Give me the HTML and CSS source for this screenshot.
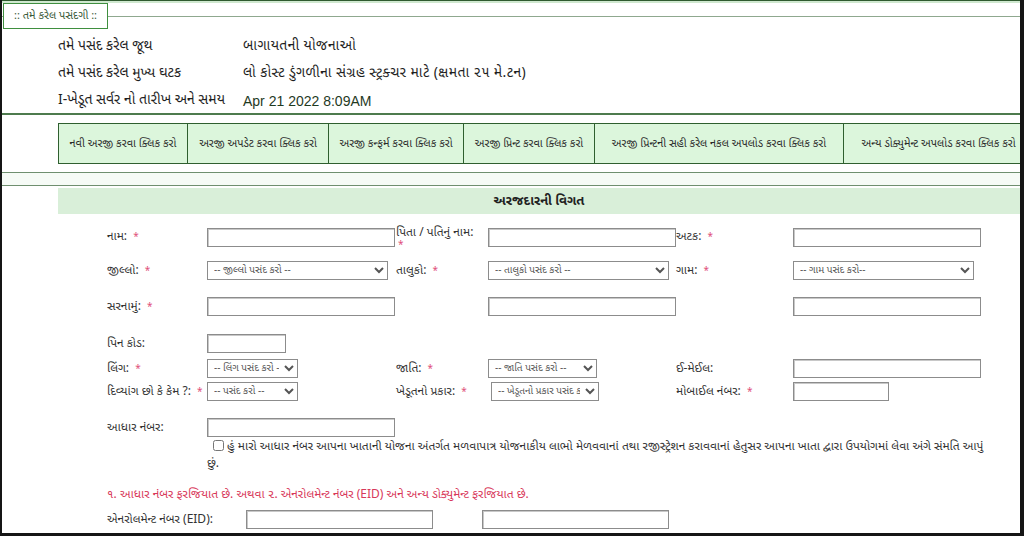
FILE: index.html
```html
<!DOCTYPE html>
<html lang="gu">
<head>
<meta charset="utf-8">
<title>અરજદારની વિગત</title>
<link rel="stylesheet" href="styles.css">
</head>
<body>
<div class="frame">
  <div class="topline"></div>
  <fieldset class="choice">
    <legend class="choice-legend">:: તમે કરેલ પસંદગી ::</legend>
    <div class="info">
      <div class="info-row"><span class="info-key">તમે પસંદ કરેલ જૂથ</span><span class="info-val">બાગાયતની યોજનાઓ</span></div>
      <div class="info-row"><span class="info-key">તમે પસંદ કરેલ મુખ્ય ઘટક</span><span class="info-val">લો કોસ્ટ ડુંગળીના સંગ્રહ સ્ટ્રક્ચર માટે (ક્ષમતા ૨૫ મે.ટન)</span></div>
      <div class="info-row"><span class="info-key">I-ખેડૂત સર્વર નો તારીખ અને સમય</span><span class="info-val info-date">Apr 21 2022 8:09AM</span></div>
    </div>
  </fieldset>

  <nav class="menu">
    <a class="menu-cell" href="#">નવી અરજી કરવા ક્લિક કરો</a>
    <a class="menu-cell" href="#">અરજી અપડેટ કરવા ક્લિક કરો</a>
    <a class="menu-cell" href="#">અરજી કન્ફર્મ કરવા ક્લિક કરો</a>
    <a class="menu-cell" href="#">અરજી પ્રિન્ટ કરવા ક્લિક કરો</a>
    <a class="menu-cell" href="#">અરજી પ્રિન્ટની સહી કરેલ નકલ અપલોડ કરવા ક્લિક કરો</a>
    <a class="menu-cell" href="#">અન્ય ડોક્યુમેન્ટ અપલોડ કરવા ક્લિક કરો</a>
  </nav>

  <div class="band"></div>

  <div class="section-head">અરજદારની વિગત</div>

  <form class="form">
    <div class="row row-first">
      <label class="lbl">નામ: <span class="req">*</span></label>
      <input class="inp w188" type="text">
      <label class="lbl lbl-wrap">પિતા / પતિનું નામ:<span class="req req-below">*</span></label>
      <input class="inp w188" type="text">
      <label class="lbl">અટક: <span class="req">*</span></label>
      <input class="inp w188" type="text">
    </div>

    <div class="row">
      <label class="lbl">જીલ્લો: <span class="req">*</span></label>
      <select class="sel w181"><option>-- જીલ્લો પસંદ કરો --</option></select>
      <label class="lbl">તાલુકો: <span class="req">*</span></label>
      <select class="sel w181"><option>-- તાલુકો પસંદ કરો --</option></select>
      <label class="lbl">ગામ: <span class="req">*</span></label>
      <select class="sel w181"><option>-- ગામ પસંદ કરો--</option></select>
    </div>

    <div class="row row-17">
      <label class="lbl">સરનામું: <span class="req">*</span></label>
      <input class="inp w188" type="text">
      <span class="lbl"></span>
      <input class="inp w188" type="text">
      <span class="lbl"></span>
      <input class="inp w188" type="text">
    </div>

    <div class="row">
      <label class="lbl">પિન કોડ:</label>
      <input class="inp w79" type="text">
    </div>

    <div class="row row-tight">
      <label class="lbl">લિંગ: <span class="req">*</span></label>
      <select class="sel w91"><option>-- લિંગ પસંદ કરો -</option></select>
      <label class="lbl">જાતિ: <span class="req">*</span></label>
      <select class="sel w109"><option>-- જાતિ પસંદ કરો --</option></select>
      <label class="lbl">ઈ-મેઈલ:</label>
      <input class="inp w188" type="text">
    </div>

    <div class="row row-tight2">
      <label class="lbl">દિવ્યાંગ છો કે કેમ ?: <span class="req">*</span></label>
      <select class="sel w91"><option>-- પસંદ કરો --</option></select>
      <label class="lbl">ખેડૂતનો પ્રકાર: <span class="req">*</span></label>
      <select class="sel w108 shift3"><option>-- ખેડૂતનો પ્રકાર પસંદ કરો --</option></select>
      <label class="lbl">મોબાઈલ નંબર: <span class="req">*</span></label>
      <input class="inp w96" type="text">
    </div>

    <div class="row row-17">
      <label class="lbl">આધાર નંબર:</label>
      <input class="inp w188" type="text">
    </div>

    <p class="consent"><input class="chk" type="checkbox"> હું મારો આધાર નંબર આપના ખાતાની યોજના અંતર્ગત મળવાપાત્ર યોજનાકીય લાભો મેળવવાનાં તથા રજીસ્ટ્રેશન કરાવવાનાં હેતુસર આપના ખાતા દ્વારા ઉપયોગમાં લેવા અંગે સંમતિ આપું છું.</p>

    <p class="note">૧. આધાર નંબર ફરજિયાત છે. અથવા ૨. એનરોલમેન્ટ નંબર (EID) અને અન્ય ડોક્યુમેન્ટ ફરજિયાત છે.</p>

    <div class="eid-row">
      <label class="lbl">એનરોલમેન્ટ નંબર (EID):</label>
      <input class="inp w187" type="text">
      <input class="inp w187" type="text">
    </div>
  </form>
</div>
</body>
</html>
```

FILE: styles.css
```css
* { box-sizing: border-box; }

html, body {
  margin: 0;
  padding: 0;
  background: #111;
}

body {
  width: 1024px;
  height: 536px;
  overflow: hidden;
  font-family: "Noto Sans Gujarati", "Lohit Gujarati", "Noto Serif Gujarati", "Liberation Sans", sans-serif;
  color: #222;
}

.frame {
  width: 1024px;
  height: 536px;
  overflow: hidden;
  background: #fff;
  border-left: 2px solid #151515;
  border-right: 4px solid #151515;
  border-bottom: 3px solid #151515;
}

.topline {
  height: 3px;
  background: #cfe8cf;
  border-top: 1px solid #2f5a2f;
}

/* ---------- selection fieldset ---------- */
.choice {
  margin: 0;
  padding: 0 0 2px 0;
  border: 0;
  border-top: 1px solid #8fa88f;
  border-bottom: 2px solid #4e7b4e;
  min-width: 0;
}

.choice-legend {
  margin-left: 1px;
  padding: 5px 10px;
  border: 1.5px solid #3f8f3f;
  font-size: 11px;
  line-height: 14px;
  color: #3a5a3a;
  background: #fff;
}

.info {
  display: flex;
  flex-direction: column;
  gap: 6px;
  padding: 7px 0 0 56px;
}

.info-row {
  display: flex;
  align-items: center;
  height: 21px;
}

.info-key {
  width: 185px;
  font-size: 14px;
  color: #1e1e1e;
}

.info-val {
  font-size: 14px;
  letter-spacing: 0.4px;
  color: #1e1e1e;
}

.info-date {
  font-family: "Liberation Sans", Arial, sans-serif;
  font-size: 14px;
  letter-spacing: 0;
  color: #1f3a1f;
}

/* ---------- menu ---------- */
.menu {
  display: grid;
  grid-template-columns: 129px 141px 135px 131px 249px 190px;
  margin: 8px 0 0 56px;
  height: 41px;
  border-top: 1.5px solid #2f5f2f;
  border-bottom: 1.5px solid #2f5f2f;
  background: #dcf6dc;
}

.menu-cell {
  display: flex;
  align-items: center;
  justify-content: center;
  border-left: 1.5px solid #2f5f2f;
  font-size: 11px;
  color: #2a2a2a;
  text-decoration: none;
  white-space: nowrap;
}

.band {
  margin-top: 8px;
  height: 14px;
  border-top: 1.5px solid #6f8f6f;
  border-bottom: 1.5px solid #6f8f6f;
  background: #f6fbf6;
}

.section-head {
  margin: 2px 0 0 56px;
  height: 26px;
  background: #d9efd9;
  display: flex;
  align-items: center;
  justify-content: center;
  font-size: 13px;
  font-weight: bold;
  color: #222;
}

/* ---------- form ---------- */
.form {
  padding-left: 105px;
}

.row {
  display: grid;
  grid-template-columns: 100px 189px 92px 188px 117px 200px;
  align-items: center;
  height: 19px;
  margin-top: 18px;
}

.row-first { margin-top: 10px; }
.row-17 { margin-top: 17px; }
.row-tight { margin-top: 6px; }
.row-tight2 { margin-top: 4px; }

.lbl {
  font-size: 12px;
  color: #333;
  white-space: nowrap;
}

.lbl-wrap {
  align-self: start;
  line-height: 14px;
  padding-top: 2px;
}

.req {
  color: #e0507a;
  font-size: 10px;
  margin-left: 3px;
}

.req-below {
  display: block;
  margin-left: 2px;
  margin-top: 2px;
  line-height: 8px;
}

.inp {
  height: 19px;
  padding: 0 3px;
  border: 1px solid #8c8c8c;
  box-shadow: inset 1px 1px 0 #c8c8c8;
  background: #fff;
  font-size: 11px;
}

.sel {
  height: 19px;
  padding: 0 2px;
  border: 1px solid #8c8c8c;
  border-radius: 0;
  background: #fff;
  font-family: inherit;
  font-size: 10px;
  color: #555;
}

.w79 { width: 79px; }
.w91 { width: 91px; }
.w96 { width: 96px; }
.w108 { width: 108px; }
.w109 { width: 109px; }
.w181 { width: 181px; }
.w187 { width: 187px; }
.w188 { width: 188px; }

.shift3 { margin-left: 3px; }

.consent {
  margin: 2px 0 0 100px;
  width: 780px;
  font-size: 12px;
  line-height: 17px;
  color: #333;
}

.chk {
  width: 11px;
  height: 11px;
  margin: 0 0 0 6px;
  vertical-align: -1px;
}

.note {
  margin: 14px 0 0 0;
  font-size: 12px;
  line-height: 17px;
  color: #d8385a;
}

.eid-row {
  display: flex;
  align-items: center;
  margin-top: 6px;
  height: 19px;
}

.eid-row .lbl {
  width: 139px;
}

.eid-row .inp + .inp {
  margin-left: 49px;
}
```
